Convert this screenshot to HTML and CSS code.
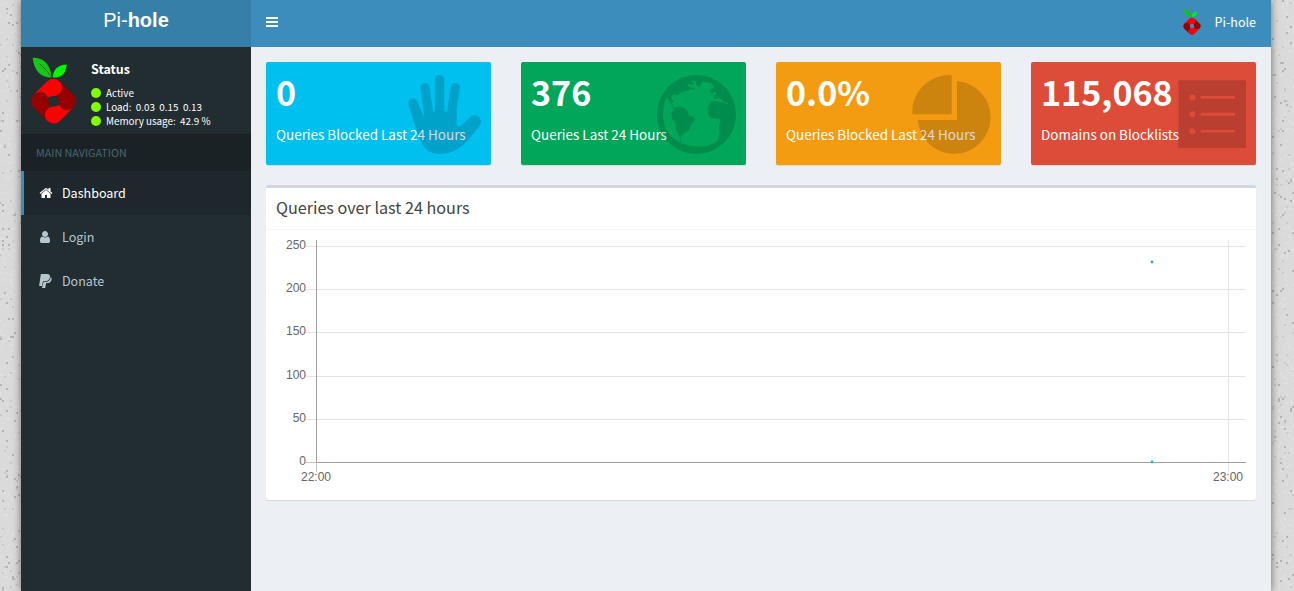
FILE: index.html
```html
<!DOCTYPE html>
<html lang="en">
<head>
<meta charset="utf-8">
<title>Pi-hole Admin Console</title>
<link rel="stylesheet" href="styles.css">
</head>
<body>
<svg class="defs" width="0" height="0">
  <symbol id="logo" viewBox="92 170 137 203">
    <path fill="#1bc41b" d="M97 172Q148 171 155 232Q104 232 97 172Z"/>
    <path fill="#00f500" d="M201 192Q160 194 158 232Q196 235 201 192Z"/>
    <path fill="none" stroke="#0a7d18" stroke-width="3" d="M118 190Q140 207 154 230"/>
    <path id="lobe-shape" d="M101 284L141 244A27 27 0 0 1 187 262A26 26 0 0 1 161 288Q151 288 143 293A26 26 0 0 0 119 277Q108 277 101 284Z" fill="#f00"/>
    <path fill="#980000" transform="rotate(90 160.500 304)" d="M101 284L141 244A27 27 0 0 1 187 262A26 26 0 0 1 161 288Q151 288 143 293A26 26 0 0 0 119 277Q108 277 101 284Z"/>
    <path fill="#f00" transform="rotate(180 160.500 304)" d="M101 284L141 244A27 27 0 0 1 187 262A26 26 0 0 1 161 288Q151 288 143 293A26 26 0 0 0 119 277Q108 277 101 284Z"/>
    <path fill="#980000" transform="rotate(270 160.500 304)" d="M101 284L141 244A27 27 0 0 1 187 262A26 26 0 0 1 161 288Q151 288 143 293A26 26 0 0 0 119 277Q108 277 101 284Z"/>
  </symbol>
</svg>
<svg class="texture" width="1294" height="591"><rect width="1294" height="591" fill="#dadada"/><path id="light" fill="#dfdfdf"/><path id="mid" fill="#c9c9c9"/><path id="dark" fill="#b4b4b4"/></svg>
<div class="wrapper">
  <aside class="sidebar">
    <div class="brand"><span>Pi-<b>hole</b></span></div>
    <div class="user-panel">
      <svg class="panel-logo"><use href="#logo"/></svg>
      <div class="status">
        <p>Status</p>
        <div class="stat"><i></i>Active</div>
        <div class="stat"><i></i>Load:&nbsp; 0.03&nbsp; 0.15&nbsp; 0.13</div>
        <div class="stat mem"><i></i>Memory usage:&nbsp; 42.9 %</div>
      </div>
    </div>
    <div class="nav-header">MAIN NAVIGATION</div>
    <nav>
      <a class="active"><svg class="home" viewBox="0 0 1792 1792"><path d="M1472 992v480q0 26-19 45t-45 19h-384v-384h-256v384h-384q-26 0-45-19t-19-45v-480q0-1 .5-3t.5-3l575-474 575 474q1 2 1 6zm223-69l-62 74q-8 9-21 11h-3q-13 0-21-7l-692-577-692 577q-12 8-24 7-13-2-21-11l-62-74q-8-10-7-23.500t11-21.500l719-599q32-26 76-26t76 26l244 204v-195q0-14 9-23t23-9h192q14 0 23 9t9 23v408l219 182q10 8 11 21.500t-7 23.500z"/></svg>Dashboard</a>
      <a><svg class="user" viewBox="0 0 1792 1792"><path d="M1536 1399q0 109-62.500 187t-150.500 78h-854q-88 0-150.500-78t-62.500-187q0-85 8.500-160.500t31.500-152 58.500-131 94-89 134.500-34.500q131 128 313 128t313-128q76 0 134.500 34.500t94 89 58.500 131 31.500 152 8.500 160.500zm-256-887q0 159-112.500 271.500t-271.500 112.500-271.500-112.500-112.500-271.500 112.500-271.500 271.500-112.500 271.500 112.500 112.500 271.500z"/></svg>Login</a>
      <a><svg viewBox="0 0 14 14"><path d="M2.200 0H8Q11.600.3 10.900 3.500Q10 7.300 6 7.300H4.600Q4 7.300 3.800 8L3 12H.6Q.1 12 .2 11.500L1.700.5Q1.800 0 2.200 0ZM11.800 2.800Q13.100 4 12.500 5.900Q11.600 9 8.500 9H7.700Q7.200 9 7 9.600L6.300 13.500Q6.200 14 5.700 14H3.400Q3 14 3.100 13.500L4.400 8.400Q4.500 8 5 8H7Q11.200 7.600 11.800 2.800Z"/></svg>Donate</a>
    </nav>
  </aside>
  <div class="main">
    <header class="topbar">
      <svg class="bars" width="12" height="10"><path fill="#fff" d="M0 0h12v2H0zM0 4h12v2H0zM0 8h12v2H0z"/></svg>
      <div class="account"><svg><use href="#logo"/></svg><span>Pi-hole</span></div>
    </header>
    <section class="content">
      <div class="boxes">
        <div class="box aqua"><h3>0</h3><p>Queries Blocked Last 24 Hours</p>
          <svg class="icon" width="73" height="79" viewBox="0 0 219 237"><g stroke="#000" stroke-linecap="round"><path stroke-width="28" d="M95 14V130M51 38L64 130M142 38L128 130M15 84L48 160"/><path stroke-width="38" d="M200 140L145 190"/><path stroke="none" d="M1 90C12 120 24 163 34 188C46 220 62 237 97 237C130 237 155 221 178 198L214 154L185 128C165 150 153 157 148 153C145 150 145 145 146 138L147 110H113V109H79V110H60L47 132L28 90Z"/></g></svg></div>
        <div class="box green"><h3>376</h3><p>Queries Last 24 Hours</p>
          <svg class="icon" width="79" height="79" viewBox="21 21 237 237"><path fill-rule="evenodd" d="M139.500 21A118.500 118.500 0 1 0 139.500 258A118.500 118.500 0 1 0 139.500 21ZM51 88C40 110 35 140 42 166C50 194 66 213 90 224L89 205L78 186L77 167L66 151L64 136L72 122L66 112L60 105ZM72 119L66 108L70 98L63 91L65 83L77 79L82 83L90 74L108 68L116 69L119 64L132 65L135 61L120 58L111 54L116 48L130 51L132 44L123 40L134 38L140 43L138 51L148 56L156 43L170 41L188 48L192 59L182 64L181 73L189 79L193 70L201 77L190 83L191 94L207 92L206 86L214 93L222 103L234 105L232 109L214 102L198 99L183 101L174 116L173 137L180 148L190 153L206 151L212 157L207 174L209 196L203 218C178 239 132 241 95 225L91 216L93 204L107 192L118 187L122 170L136 155L130 146L117 144L113 131L103 121L84 115Z"/></svg></div>
        <div class="box orange"><h3>0.0%</h3><p>Queries Blocked Last 24 Hours</p>
          <svg class="icon" width="79" height="79" viewBox="0 0 237 237"><path d="M119 0V118H1C-2 50 50-1 119 0ZM135 18A109.500 109.500 0 1 1 17 135H135Z"/></svg></div>
        <div class="box red"><h3>115,068</h3><p>Domains on Blocklists</p>
          <svg class="icon list" width="68" height="68" viewBox="0 0 203 203"><path fill-rule="evenodd" d="M1 1H203V203H1ZM34 52a9 9 0 1 0 18 0a9 9 0 1 0-18 0M34 102a9 9 0 1 0 18 0a9 9 0 1 0-18 0M34 153a9 9 0 1 0 18 0a9 9 0 1 0-18 0M68 48h102v8H68zM68 98h102v9H68zM68 149h102v8H68z"/></svg></div>
      </div>
      <div class="chart-card">
        <h4>Queries over last 24 hours</h4>
        <svg class="chart" width="970" height="260">
          <path stroke="#e4e4e4" d="M30 16.500H970M30 59.500H970M30 102.500H970M30 146.500H970M30 189.500H970M952.500 10V242"/>
          <path stroke="#a0a0a0" d="M40.500 10V232M40 232.500H970"/>
          <path stroke="#c6c6c6" d="M30 232.500H40M40.500 233V242"/>
          <g text-anchor="end"><text x="30" y="19">250</text><text x="30" y="62">200</text><text x="30" y="105">150</text><text x="30" y="149">100</text><text x="30" y="192">50</text><text x="30" y="235">0</text></g>
          <g text-anchor="middle"><text x="40" y="251">22:00</text><text x="952" y="251">23:00</text></g>
          <circle cx="876" cy="32" r="1.400" fill="#3aa9a9"/><circle cx="876" cy="232" r="1.400" fill="#00c0ef"/>
        </svg>
      </div>
    </section>
  </div>
</div>
<script src="texture.js"></script>
</body>
</html>
```
FILE: styles.css
```css
* { box-sizing: border-box; }
body { margin: 0; height: 591px; overflow: hidden; background: #dadada; font: 12.54px/20px "Noto Sans CJK SC", "Noto Sans", sans-serif; color: #333; }
h3, h4, p { margin: 0; }
svg { display: block; }
.defs, .texture { position: absolute; left: 0; top: 0; }
.wrapper { position: relative; display: flex; width: 1250px; height: 591px; margin-left: 21px; background: #ecf0f5; box-shadow: 0 0 8px rgba(0,0,0,.5); }
.sidebar { width: 230px; background: #222d32; }
.brand { height: 47px; padding-top: 10px; background: #367fa9; color: #fff; text-align: center; font: 20px/20px "Liberation Sans", sans-serif; }
.user-panel { display: flex; height: 87px; padding: 10px; gap: 15px; color: #fff; }
.panel-logo { width: 45px; height: 67px; }
.status p { height: 29px; padding-top: 2px; font-weight: 700; }
.stat { display: flex; align-items: center; height: 14px; font-size: 9.85px; line-height: 14px; white-space: pre; }
.stat i { width: 10px; height: 10px; margin-right: 5px; border-radius: 50%; background: #7fff00; }
.nav-header { height: 37px; padding: 9px 15px; background: #1a2226; color: #4b646f; font-size: 10.75px; }
nav a { display: flex; align-items: center; height: 44px; padding-left: 15px; border-left: 3px solid transparent; color: #b8c7ce; }
nav a.active { color: #fff; background: #1e282c; border-color: #3c8dbc; }
nav svg { width: 14px; height: 14px; margin-right: 9px; fill: currentColor; }
nav svg.user { margin-left: -1px; margin-right: 10px; }
nav svg.home { margin-left: -.5px; margin-right: 9.5px; }
.main { flex: 1; }
.topbar { display: flex; align-items: center; justify-content: space-between; height: 47px; padding: 0 15px; background: #3c8dbc; color: #fff; }
.bars { margin-top: -3px; }
.account { display: flex; align-items: center; gap: 14px; margin-top: -3px; }
.account svg { width: 18px; height: 26px; }
.content { padding: 15px; }
.boxes { display: grid; grid-template-columns: repeat(4, 225px); gap: 30px; }
.box { position: relative; height: 103px; padding: 10px; border-radius: 2px; color: #fff; box-shadow: 0 1px 1px rgba(0,0,0,.1); }
.box h3 { height: 52px; font-size: 34.1px; line-height: 39px; font-weight: 700; }
.box p { font-size: 13.47px; line-height: 21px; white-space: nowrap; }
.aqua { background: #00c0ef; }
.green { background: #00a65a; }
.orange { background: #f39c12; }
.red { background: #dd4b39; }
.icon { position: absolute; right: 10px; top: 13px; opacity: .15; }
.icon.list { top: 18px; }
.chart-card { height: 315px; margin-top: 20px; border-top: 3px solid #d2d6de; border-radius: 3px; background: #fff; box-shadow: 0 1px 1px rgba(0,0,0,.1); }
.chart-card h4 { height: 42px; padding: 9px 10px; border-bottom: 1px solid #f4f4f4; font-size: 16.15px; line-height: 20px; font-weight: 400; color: #444; }
.chart { margin: 0 10px; }
.chart text { fill: #666; font: 12px "Liberation Sans", sans-serif; }
```
FILE: texture.js
```js
// Scatter 2px specks over the page margins with a fixed seed.
let seed = 7;
const rand = () => (seed = (seed * 16807) % 2147483647) / 2147483647;
const scatter = (id, count) => {
  let d = '';
  for (let i = 0; i < count; i++) {
    const x = Math.floor(rand() * 11) * 2 + (rand() < 0.5 ? 0 : 1272);
    d += `M${x} ${Math.floor(rand() * 296) * 2}h2v2h-2z`;
  }
  document.getElementById(id).setAttribute('d', d);
};
scatter('light', 700);
scatter('mid', 150);
scatter('dark', 150);
```
